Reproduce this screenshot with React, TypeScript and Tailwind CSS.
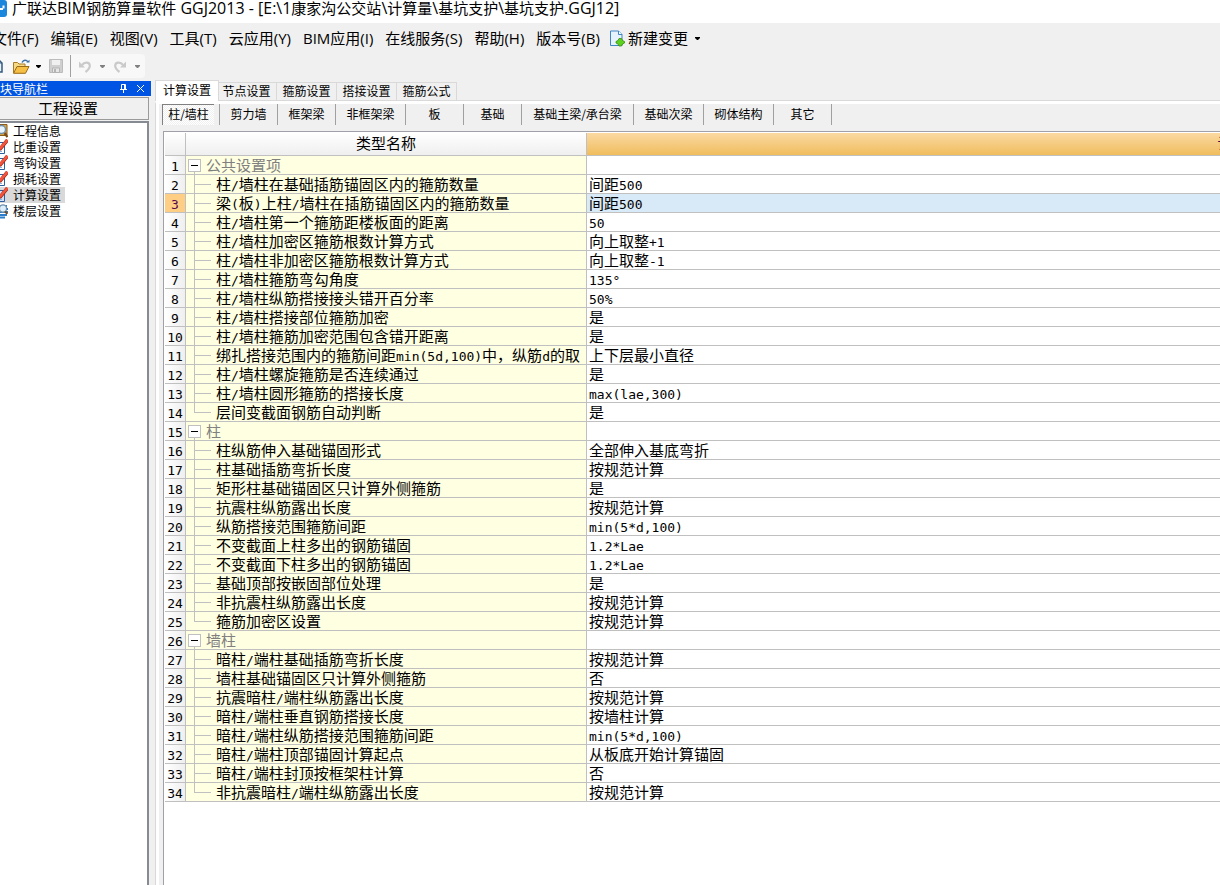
import React, { useState } from 'react';
import clsx from 'clsx';

interface Setting {
  name: string;
  value: string;
}

interface SettingGroup {
  title: string;
  items: Setting[];
}

const TITLE = '广联达BIM钢筋算量软件 GGJ2013 - [E:\\1康家沟公交站\\计算量\\基坑支护\\基坑支护.GGJ12]';

const MENUS = ['文件(F)', '编辑(E)', '视图(V)', '工具(T)', '云应用(Y)', 'BIM应用(I)', '在线服务(S)', '帮助(H)', '版本号(B)'];

const TABS = ['计算设置', '节点设置', '箍筋设置', '搭接设置', '箍筋公式'];

const SUB_TABS = [
  { label: '柱/墙柱', width: 'w-[58px]' },
  { label: '剪力墙', width: 'w-[58px]' },
  { label: '框架梁', width: 'w-[58px]' },
  { label: '非框架梁', width: 'w-[70px]' },
  { label: '板', width: 'w-[58px]' },
  { label: '基础', width: 'w-[58px]' },
  { label: '基础主梁/承台梁', width: 'w-[112px]' },
  { label: '基础次梁', width: 'w-[70px]' },
  { label: '砌体结构', width: 'w-[70px]' },
  { label: '其它', width: 'w-[58px]' },
];

const GROUPS: SettingGroup[] = [
  {
    title: '公共设置项',
    items: [
      { name: '柱/墙柱在基础插筋锚固区内的箍筋数量', value: '间距500' },
      { name: '梁(板)上柱/墙柱在插筋锚固区内的箍筋数量', value: '间距500' },
      { name: '柱/墙柱第一个箍筋距楼板面的距离', value: '50' },
      { name: '柱/墙柱加密区箍筋根数计算方式', value: '向上取整+1' },
      { name: '柱/墙柱非加密区箍筋根数计算方式', value: '向上取整-1' },
      { name: '柱/墙柱箍筋弯勾角度', value: '135°' },
      { name: '柱/墙柱纵筋搭接接头错开百分率', value: '50%' },
      { name: '柱/墙柱搭接部位箍筋加密', value: '是' },
      { name: '柱/墙柱箍筋加密范围包含错开距离', value: '是' },
      { name: '绑扎搭接范围内的箍筋间距min(5d,100)中，纵筋d的取', value: '上下层最小直径' },
      { name: '柱/墙柱螺旋箍筋是否连续通过', value: '是' },
      { name: '柱/墙柱圆形箍筋的搭接长度', value: 'max(lae,300)' },
      { name: '层间变截面钢筋自动判断', value: '是' },
    ],
  },
  {
    title: '柱',
    items: [
      { name: '柱纵筋伸入基础锚固形式', value: '全部伸入基底弯折' },
      { name: '柱基础插筋弯折长度', value: '按规范计算' },
      { name: '矩形柱基础锚固区只计算外侧箍筋', value: '是' },
      { name: '抗震柱纵筋露出长度', value: '按规范计算' },
      { name: '纵筋搭接范围箍筋间距', value: 'min(5*d,100)' },
      { name: '不变截面上柱多出的钢筋锚固', value: '1.2*Lae' },
      { name: '不变截面下柱多出的钢筋锚固', value: '1.2*Lae' },
      { name: '基础顶部按嵌固部位处理', value: '是' },
      { name: '非抗震柱纵筋露出长度', value: '按规范计算' },
      { name: '箍筋加密区设置', value: '按规范计算' },
    ],
  },
  {
    title: '墙柱',
    items: [
      { name: '暗柱/端柱基础插筋弯折长度', value: '按规范计算' },
      { name: '墙柱基础锚固区只计算外侧箍筋', value: '否' },
      { name: '抗震暗柱/端柱纵筋露出长度', value: '按规范计算' },
      { name: '暗柱/端柱垂直钢筋搭接长度', value: '按墙柱计算' },
      { name: '暗柱/端柱纵筋搭接范围箍筋间距', value: 'min(5*d,100)' },
      { name: '暗柱/端柱顶部锚固计算起点', value: '从板底开始计算锚固' },
      { name: '暗柱/端柱封顶按框架柱计算', value: '否' },
      { name: '非抗震暗柱/端柱纵筋露出长度', value: '按规范计算' },
    ],
  },
];

interface MixedTextProps {
  text: string;
  latin?: string;
}

// Latin runs get their own size and face; in the grid they take half a CJK cell each
const MixedText: React.FC<MixedTextProps> = ({ text, latin = "font-['DejaVu_Sans_Mono',monospace] text-[13px] leading-[10px]" }) => (
  <>
    {text.split(/([\x20-\x7e°]+)/).map((part, i) =>
      i % 2 === 1 ? <span key={i} className={latin}>{part}</span> : part
    )}
  </>
);

const Caret: React.FC<{ className?: string }> = ({ className }) => (
  <svg viewBox="0 0 5 3" className={clsx('h-[3px] w-[5px] shrink-0', className)} fill="currentColor">
    <path d="M0 0h5v1L3 3H2L0 1z" />
  </svg>
);

const AppLogo = () => (
  <svg viewBox="0 0 16 18" className="h-[18px] w-4 shrink-0">
    <rect width="15" height="17" rx="3" fill="#1a86dc" />
    <path d="M3 9h8M11.500 5.500v3" fill="none" stroke="#fff" strokeWidth="2" />
  </svg>
);

const NewChangeIcon = () => (
  <svg viewBox="0 0 15 17" className="h-[17px] w-[15px] shrink-0">
    <path d="M.5 1h8l3.500 3.500V15.500H.5z" fill="#e6f3fc" stroke="#3f86c4" />
    <path d="M8.500 1v3.500H12" fill="#fff" stroke="#3f86c4" />
    <path d="M9 8.500h2.500l1 2 2 1V13l-2 1-1 2H9l-1-2-2-1v-1.500l2-1z" fill="#5fd11f" stroke="#358a12" strokeWidth=".8" />
  </svg>
);

const NewFileIcon = () => (
  <svg viewBox="0 0 12 14" className="h-[14px] w-3 shrink-0">
    <path d="M1 1h7l3 3v9H1z" fill="#e9f1fa" stroke="#33597f" strokeWidth="1.500" />
    <path d="M8 1v3h3" fill="none" stroke="#33597f" />
  </svg>
);

const OpenIcon = () => (
  <svg viewBox="0 0 17 15" className="h-[15px] w-[17px] shrink-0">
    <path d="M.5 14V3.500h4l1.500 1.500h6V8" fill="#f7d984" stroke="#a87b24" />
    <path d="M.5 14.300L4 7.500h12L12.500 14.300z" fill="#f6bf45" stroke="#9a6b16" />
    <path d="M9 3.500c1.500-3 4.500-3 6-.5" fill="none" stroke="#3c6fa5" strokeWidth="1.400" />
    <path d="M13.300 3.500h3.200V.8z" fill="#3c6fa5" />
  </svg>
);

const SaveIcon = () => (
  <svg viewBox="0 0 14 14" className="size-[14px] shrink-0">
    <path d="M.5.5h13v13h-13z" fill="#cfcfcf" stroke="#bcbcbc" />
    <path d="M3 1h8v5H3z" fill="#f0f0f0" />
    <path d="M3.500 9h7v4.500h-7z" fill="#e6e6e6" stroke="#b4b4b4" />
    <path d="M5 10h2v3H5z" fill="#b4b4b4" />
  </svg>
);

const UndoIcon: React.FC<{ flip?: boolean }> = ({ flip }) => (
  <svg viewBox="0 0 12 13" className={clsx('h-[13px] w-3 shrink-0', flip && '-scale-x-100')}>
    <path d="M3 5c2.500-3.500 7.500-3 7.800.5.2 2.500-1.500 4.500-4.300 6.500" fill="none" stroke="#cacaca" strokeWidth="2.200" />
    <path d="M0 1.500v6h6z" fill="#cacaca" />
  </svg>
);

const InfoIcon = () => (
  <svg viewBox="0 0 16 16" className="size-4 shrink-0">
    <path d="M2 1.500h13v11H2z" fill="#d9a441" stroke="#8a5a17" />
    <path d="M4 3.500h9v7H4z" fill="#f6e3b4" />
    <circle cx="9.500" cy="6.500" r="4" fill="#e8f4fd" stroke="#6f8da8" strokeWidth="1.400" />
    <path d="M12.500 10l3 4" stroke="#7b4a16" strokeWidth="2.400" />
  </svg>
);

const CheckIcon: React.FC<{ tint: string }> = ({ tint }) => (
  <svg viewBox="0 0 16 16" className="size-4 shrink-0">
    <path d="M1 3.500h11.500v11H1z" fill={tint} stroke="#2e5f9e" />
    <path d="M3 12.500h7" stroke="#8db2de" />
    <path d="M5 7.500l3.500 2L15.500 1" fill="none" stroke="#9c2415" strokeWidth="3.600" />
    <path d="M5 7l3.500 2L15.500.8" fill="none" stroke="#f2543d" strokeWidth="2.600" />
  </svg>
);

const FloorIcon = () => (
  <svg viewBox="0 0 16 16" className="size-4 shrink-0">
    <path d="M4 3h11M4 6h12M3 9h13M3 12h12M5 14.500h8" stroke="#2b7cc9" strokeWidth="1.800" />
    <circle cx="11" cy="5.500" r="3.600" fill="#dceefb" stroke="#7592aa" strokeWidth="1.300" />
    <path d="M13.200 8.300l2 2.700" stroke="#7b4a16" strokeWidth="2" />
  </svg>
);

const NAV_ITEMS = [
  { label: '工程信息', icon: <InfoIcon /> },
  { label: '比重设置', icon: <CheckIcon tint="#ffffff" /> },
  { label: '弯钩设置', icon: <CheckIcon tint="#ffffff" /> },
  { label: '损耗设置', icon: <CheckIcon tint="#ffffff" /> },
  { label: '计算设置', icon: <CheckIcon tint="#cfe2f7" /> },
  { label: '楼层设置', icon: <FloorIcon /> },
];

const Sidebar = () => {
  const [current, setCurrent] = useState('计算设置');

  return (
    <aside className="flex w-[151px] shrink-0 flex-col pt-px text-xs">
      <div className="flex h-[15px] items-center bg-[#0054e3] text-white">
        <span className="-ml-3 flex-1 whitespace-nowrap leading-[15px]">模块导航栏</span>
        <button aria-label="固定" className="mr-1 p-0.5">
          <svg viewBox="0 0 9 9" className="size-[9px]" fill="none" stroke="currentColor">
            <path d="M2.500 5V.5h4V5M5.500 1v4M1 5.500h7M4.500 6v3" />
          </svg>
        </button>
        <button aria-label="关闭" className="mr-1 p-0.5">
          <svg viewBox="0 0 9 9" className="size-[9px]" fill="none" stroke="currentColor">
            <path d="M1 1l7 7M8 1l-7 7" />
          </svg>
        </button>
      </div>
      <button className="mt-px mr-0.5 h-[23px] border-y border-r border-[#9a9a9a] bg-[#f0f0f0] pr-3 pb-px text-[15px] leading-5">
        工程设置
      </button>
      <nav className="mt-px mr-0.5 flex flex-1 flex-col items-start border-t-2 border-r-2 border-[#868a92] bg-white">
        {NAV_ITEMS.map(item => (
          <button
            key={item.label}
            onClick={() => setCurrent(item.label)}
            className={clsx('-ml-2 flex h-4 items-center gap-[5px] pr-1 leading-4', current === item.label && 'bg-[#d9d9d9]')}
          >
            {item.icon}
            {item.label}
          </button>
        ))}
      </nav>
    </aside>
  );
};

interface SettingsTableProps {
  selectedRow: number;
  onSelect: (row: number) => void;
}

const SettingsTable: React.FC<SettingsTableProps> = ({ selectedRow, onSelect }) => {
  const [closed, setClosed] = useState<string[]>([]);
  let row = 0;

  const toggle = (title: string) =>
    setClosed(prev => (prev.includes(title) ? prev.filter(t => t !== title) : [...prev, title]));

  return (
    <table className="w-[1728px] table-fixed border-separate border-spacing-0 text-[15px] leading-[18px] whitespace-nowrap">
      <colgroup>
        <col className="w-[21px]" />
        <col className="w-[401px]" />
        <col />
      </colgroup>
      <thead>
        <tr className="h-[23px] *:border-b *:border-[#c0c0c0] *:px-0 *:pt-0 *:pb-0.5 *:font-normal">
          <th className="border-r bg-linear-to-b from-white to-[#efefef]" />
          <th className="border-r bg-linear-to-b from-white to-[#efefef]">类型名称</th>
          <th className="bg-linear-to-b from-[#fad9a0] to-[#f0bd5c] text-[#3a0a3a]">设置值</th>
        </tr>
      </thead>
      <tbody>
        {GROUPS.map(group => {
          const isClosed = closed.includes(group.title);
          const groupRow = ++row;
          return (
            <React.Fragment key={group.title}>
              <tr className="h-[19px] *:border-b *:border-[#c0c0c0] *:p-0">
                <td className="border-r bg-linear-to-r from-white to-[#efefef] text-center">
                  <MixedText text={String(groupRow)} />
                </td>
                <td className="border-r bg-[#ffffe1] text-[#808080]">
                  <div className="flex h-[18px]">
                    <div className="ml-0.5 flex w-[13px] flex-col items-center pt-[3px]">
                      <button
                        aria-label={group.title}
                        onClick={() => toggle(group.title)}
                        className="flex size-[13px] shrink-0 items-center justify-center border border-[#c0c0c0] bg-white"
                      >
                        <span className="h-px w-[7px] bg-black" />
                      </button>
                      {!isClosed && <span className="w-px flex-1 bg-[#c0c0c0]" />}
                    </div>
                    <span className="ml-[5px]">{group.title}</span>
                  </div>
                </td>
                <td className="bg-white" />
              </tr>

              {!isClosed && group.items.map((item, i) => {
                const n = ++row;
                const selected = n === selectedRow;
                const last = i === group.items.length - 1;
                return (
                  <tr key={n} onClick={() => onSelect(n)} className="h-[19px] *:border-b *:border-[#c0c0c0] *:p-0">
                    <td className={clsx('border-r text-center', selected ? 'bg-[#ffce85] text-[#5a0a4a]' : 'bg-linear-to-r from-white to-[#efefef]')}>
                      <MixedText text={String(n)} />
                    </td>
                    <td className="border-r bg-[#ffffe1]">
                      <div className="flex h-[18px]">
                        <div className="ml-2 flex w-[17px] shrink-0 flex-col">
                          <span className="h-2.5 border-b border-l border-[#c0c0c0]" />
                          {!last && <span className="flex-1 border-l border-[#c0c0c0]" />}
                        </div>
                        <span className="ml-[5px]"><MixedText text={item.name} /></span>
                      </div>
                    </td>
                    <td className={selected ? 'bg-[#d8e9f7]' : 'bg-white'}>
                      <div className="h-[18px] pl-0.5"><MixedText text={item.value} /></div>
                    </td>
                  </tr>
                );
              })}
            </React.Fragment>
          );
        })}
      </tbody>
    </table>
  );
};

const App: React.FC = () => {
  const [tab, setTab] = useState(TABS[0]);
  const [subTab, setSubTab] = useState(SUB_TABS[0].label);
  const [selectedRow, setSelectedRow] = useState(3);

  return (
    <div className="flex min-h-screen flex-col overflow-hidden bg-[#f0f0f0] font-['Noto_Sans_CJK_SC',sans-serif] text-black">
      {/* Title bar */}
      <header className="flex h-[23px] items-start gap-1 bg-white">
        <div className="-ml-2"><AppLogo /></div>
        <h1 className="font-['Open_Sans','Noto_Sans_CJK_SC',sans-serif] text-[15px] leading-4 whitespace-nowrap">
          <MixedText text={TITLE} latin="text-base leading-3" />
        </h1>
      </header>

      {/* Menu bar */}
      <nav className="-ml-2 flex h-[31px] items-center gap-3 pb-px font-['Open_Sans','Noto_Sans_CJK_SC',sans-serif] text-[15px] whitespace-nowrap">
        {MENUS.map(menu => (
          <button key={menu}>{menu}</button>
        ))}
        <button className="-ml-0.5 flex items-center gap-[3px]">
          <NewChangeIcon />
          新建变更
          <Caret className="ml-1" />
        </button>
      </nav>

      {/* Toolbar */}
      <div className="mb-0.5 flex h-6 w-[145px] items-center rounded-r bg-[#f8f8f8]">
        <button aria-label="新建" className="-ml-[9px]"><NewFileIcon /></button>
        <button aria-label="打开" className="ml-2.5 flex items-center gap-1.5">
          <OpenIcon />
          <Caret />
        </button>
        <button aria-label="保存" className="ml-2"><SaveIcon /></button>
        <span className="mr-2 ml-[7px] h-[22px] w-px bg-[#a0a0a0]" />
        <button aria-label="撤销" className="flex items-center gap-[9px] text-[#808080]">
          <UndoIcon />
          <Caret />
        </button>
        <button aria-label="恢复" className="ml-[9px] flex items-center gap-[9px] text-[#808080]">
          <UndoIcon flip />
          <Caret />
        </button>
      </div>

      <div className="flex flex-1">
        <Sidebar />

        <main className="ml-1 flex min-w-0 flex-1 flex-col text-xs">
          <div role="tablist" className="flex h-[21px] items-end">
            {TABS.map(t => (
              <button
                key={t}
                role="tab"
                aria-selected={tab === t}
                onClick={() => setTab(t)}
                className={clsx(
                  'border-t border-r border-[#d9d9d9] leading-4',
                  tab === t ? 'z-10 -mr-0.5 h-[21px] w-16 border-l bg-white pb-0.5' : 'h-[19px] w-[60px] border-b pb-px'
                )}
              >
                {t}
              </button>
            ))}
            <span className="flex-1 border-b border-[#d9d9d9]" />
          </div>

          <div className="flex flex-1 flex-col border-t-[3px] border-l border-t-white border-l-[#d9d9d9]">
            <div className="flex flex-1 flex-col border-l-[3px] border-white">
              <div role="tablist" className="flex h-[27px] items-start pl-[3px]">
                {SUB_TABS.map(s => (
                  <div key={s.label} className={clsx('flex h-[21px] shrink-0 border-r border-[#a0a0a0]', s.width)}>
                    <button
                      role="tab"
                      aria-selected={subTab === s.label}
                      onClick={() => setSubTab(s.label)}
                      className={clsx(
                        'flex-1 pb-0.5 leading-[18px]',
                        subTab === s.label &&
                          'mr-[5px] border-t border-l border-[#808080] bg-[repeating-conic-gradient(#fff_0_25%,#f0f0f0_0_50%)] bg-[length:2px_2px]'
                      )}
                    >
                      {s.label}
                    </button>
                  </div>
                ))}
              </div>
              <div className="ml-1 flex-1 overflow-hidden border-t border-l border-[#a0a0a8] bg-white pt-px pl-px">
                <SettingsTable selectedRow={selectedRow} onSelect={setSelectedRow} />
              </div>
            </div>
          </div>
        </main>
      </div>
    </div>
  );
};

export default App;
